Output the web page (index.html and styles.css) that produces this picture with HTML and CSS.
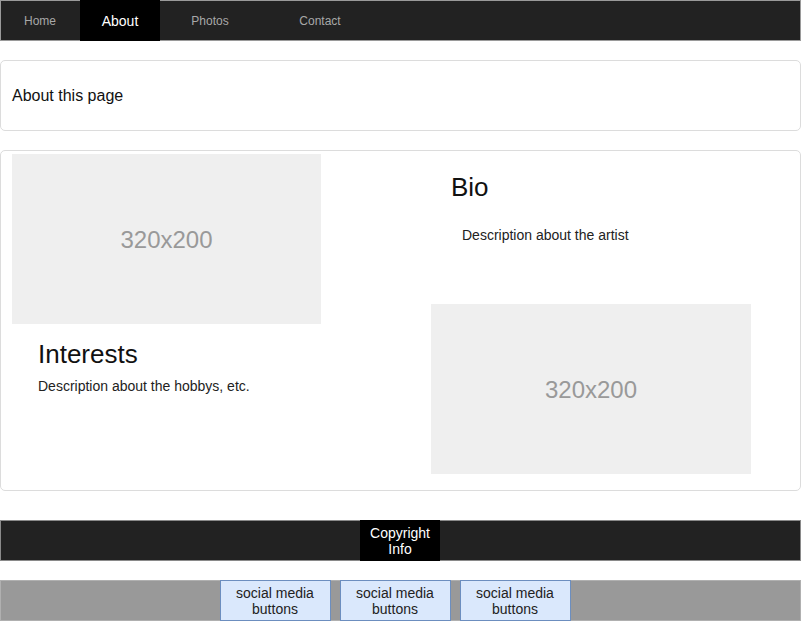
FILE: index.html
```html
<!DOCTYPE html>
<html>
<head>
<meta charset="utf-8">
<link rel="stylesheet" href="styles.css">
</head>
<body>
<nav class="nav">
  <ul class="nav-list">
    <li class="nav-item w80">Home</li>
    <li class="nav-item w80 active">About</li>
    <li class="nav-item w100">Photos</li>
    <li class="nav-item w120">Contact</li>
  </ul>
</nav>

<section class="card intro">About this page</section>

<section class="card content">
  <div class="col left">
    <div class="placeholder ph-left">320x200</div>
    <div class="interests">
      <h2 class="heading">Interests</h2>
      <p class="desc">Description about the hobbys, etc.</p>
    </div>
  </div>
  <div class="col right">
    <h2 class="heading bio">Bio</h2>
    <p class="desc bio-desc">Description about the artist</p>
    <div class="placeholder ph-right">320x200</div>
  </div>
</section>

<footer class="footer">
  <div class="copyright">Copyright Info</div>
</footer>

<div class="social">
  <div class="social-row">
    <div class="social-btn">social media buttons</div>
    <div class="social-btn">social media buttons</div>
    <div class="social-btn">social media buttons</div>
  </div>
</div>
</body>
</html>
```

FILE: styles.css
```css
* { box-sizing: border-box; }
html, body { margin: 0; padding: 0; }
body {
  width: 801px;
  font-family: "Liberation Sans", Arial, sans-serif;
  color: #222;
  background: #fff;
}

.nav {
  height: 41px;
  background: #222;
  border: 1px solid #9a9a9a;
}
.nav-list {
  list-style: none;
  margin: -1px;
  padding: 0;
  display: flex;
  height: 41px;
}
.nav-item {
  height: 41px;
  padding-top: 1px;
  line-height: 40px;
  text-align: center;
  font-size: 12px;
  color: #a8a8a8;
}
.w80 { width: 80px; }
.w100 { width: 100px; }
.w120 { width: 120px; }
.nav-item.active {
  background: #000;
  color: #fff;
  font-size: 14px;
}

.card {
  border: 1px solid #dcdcdc;
  border-radius: 5px;
  background: #fff;
}
.intro {
  margin-top: 19px;
  height: 71px;
  display: flex;
  align-items: center;
  padding-left: 11px;
  font-size: 16px;
  color: #111;
}
.content {
  margin-top: 19px;
  height: 341px;
  display: flex;
}
.col { width: 399px; }
.col.left { padding-top: 3px; padding-left: 11px; }
.col.right { padding-top: 21px; }

.placeholder {
  background: #efefef;
  color: #999;
  font-size: 24px;
  display: flex;
  align-items: center;
  justify-content: center;
  padding-top: 2px;
}
.ph-left { width: 309px; height: 170px; }
.ph-right { width: 320px; height: 170px; margin-left: 31px; margin-top: 61px; }

.heading {
  margin: 0;
  font-size: 26px;
  font-weight: normal;
  line-height: 30px;
  color: #111;
}
.desc {
  margin: 0;
  font-size: 14px;
  line-height: 16px;
  color: #222;
}
.interests { padding-left: 26px; padding-top: 15px; }
.interests .desc { margin-top: 9px; }
.bio { margin-left: 51px; }
.bio-desc { margin-left: 62px; margin-top: 25px; }

.footer {
  margin-top: 29px;
  height: 41px;
  background: #222;
  border: 1px solid #8a8a8a;
  display: flex;
  justify-content: center;
  padding-right: 1px;
}
.copyright {
  margin: -1px 0;
  width: 80px;
  height: 41px;
  background: #000;
  color: #fff;
  font-size: 14px;
  line-height: 16px;
  text-align: center;
  display: flex;
  align-items: center;
  justify-content: center;
  padding: 0 8px;
}

.social {
  margin-top: 19px;
  height: 41px;
  background: #999;
  border: 1px solid #b0b0b0;
}
.social-row {
  margin: -1px;
  height: 41px;
  display: flex;
  justify-content: center;
  gap: 9px;
  padding-right: 11px;
}
.social-btn {
  width: 111px;
  height: 41px;
  background: #dae8fc;
  border: 1px solid #6c8ebf;
  font-size: 14px;
  line-height: 16px;
  text-align: center;
  color: #222;
  display: flex;
  align-items: center;
  justify-content: center;
  padding: 0 8px;
}
```
